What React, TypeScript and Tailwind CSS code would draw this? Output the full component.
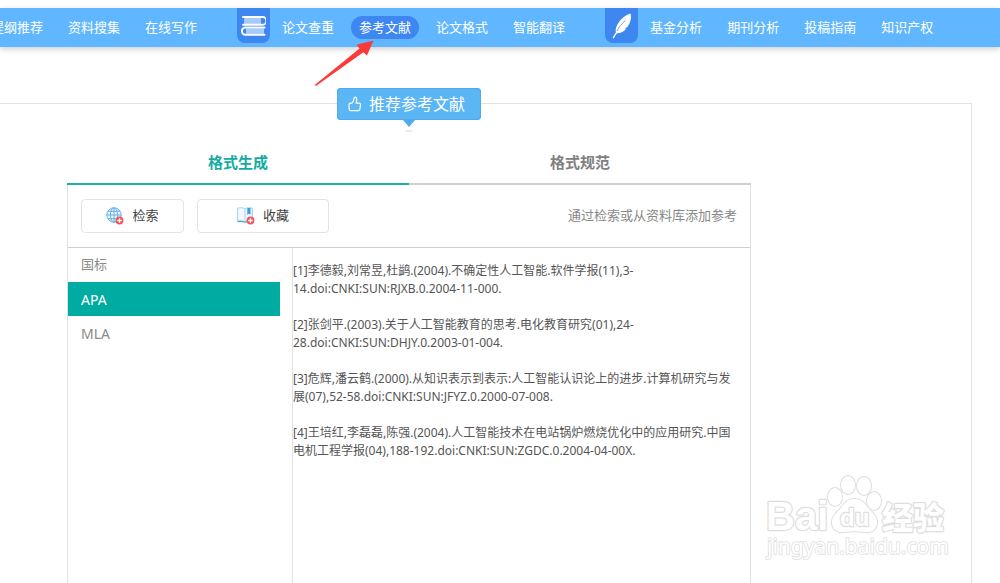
import React from "react";
import clsx from "clsx";

const writing = ["提纲推荐", "资料搜集", "在线写作"];
const checking = ["论文查重", "参考文献", "论文格式", "智能翻译"];
const publishing = ["基金分析", "期刊分析", "投稿指南", "知识产权"];
const styles = ["国标", "APA", "MLA"];

const references = [
  "[1]李德毅,刘常昱,杜鹢.(2004).不确定性人工智能.软件学报(11),3-14.doi:CNKI:SUN:RJXB.0.2004-11-000.",
  "[2]张剑平.(2003).关于人工智能教育的思考.电化教育研究(01),24-28.doi:CNKI:SUN:DHJY.0.2003-01-004.",
  "[3]危辉,潘云鹤.(2000).从知识表示到表示:人工智能认识论上的进步.计算机研究与发展(07),52-58.doi:CNKI:SUN:JFYZ.0.2000-07-008.",
  "[4]王培红,李磊磊,陈强.(2004).人工智能技术在电站锅炉燃烧优化中的应用研究.中国电机工程学报(04),188-192.doi:CNKI:SUN:ZGDC.0.2004-04-00X.",
];

function BooksIcon() {
  return (
    <svg width="25" height="20" viewBox="0 0 25 20" fill="none" aria-hidden="true">
      <path d="M3 2h17v6H3z" fill="#a9cbfb" />
      <path d="M5 12.400h18v5.400H5z" fill="#a9cbfb" />
      <path d="M2 1h19.500a3.800 3.800 0 0 1 0 7.800H2" stroke="#fff" strokeWidth="2" strokeLinecap="round" />
      <path d="M23.500 11.400H4.600a3.700 3.700 0 0 0 0 7.400h18.900" stroke="#fff" strokeWidth="2" strokeLinecap="round" />
    </svg>
  );
}

function FeatherIcon() {
  return (
    <svg width="20" height="26" viewBox="0 0 20 26" aria-hidden="true">
      <path d="M18.600.4C12.500 2 6 8.500 4.200 14.200c-.7 2.300-.6 3.700-.3 5L.6 24.600l1 .8 3.300-5.200c3.800.2 6.800-1.600 9.100-4.300l-1.200-.1 2.700-2c3-4.300 4.300-9.300 3.100-13.400z" fill="#fff" />
      <path d="M5 18C7 14 10 10.500 13.500 7.300" stroke="#3f87f0" strokeWidth=".8" fill="none" />
    </svg>
  );
}

function PlusDot() {
  return (
    <>
      <circle cx="13.500" cy="13.500" r="3.900" fill="#f4525c" />
      <path d="M13.500 11.300v4.400M11.300 13.500h4.400" stroke="#fff" strokeWidth="1.300" />
    </>
  );
}

function GlobeIcon() {
  return (
    <svg width="18" height="18" viewBox="0 0 18 18" fill="none" aria-hidden="true">
      <g stroke="#67b1e8" strokeWidth="1">
        <circle cx="8" cy="8" r="7.200" fill="#eaf5fd" />
        <ellipse cx="8" cy="8" rx="3.600" ry="7.200" />
        <path d="M8 .8v14.400M.8 8h14.400M2 4.300h12M2 11.700h12" />
      </g>
      <PlusDot />
    </svg>
  );
}

function BookmarkIcon() {
  return (
    <svg width="18" height="18" viewBox="0 0 18 18" fill="none" aria-hidden="true">
      <path d="M.6 1.200c2.500-.8 5-.6 7.400.4 2.300-1 4.700-1.200 7.400-.4v13c-2.700-.5-5.100-.4-7.400.6-2.300-1-4.900-1.100-7.400-.6z" fill="#f1f9fe" stroke="#9fd2f3" />
      <path d="M.5 14.600c2.500-.5 5-.4 7.500.5l3-.8" stroke="#4fa6e4" strokeWidth="1.300" />
      <path d="M8 1.800v13" stroke="#9fd2f3" />
      <path d="M10.300 1h3.200v7l-1.600-1.500L10.300 8z" fill="#3f9be0" />
      <PlusDot />
    </svg>
  );
}

function ThumbIcon() {
  return (
    <svg width="14" height="16" viewBox="0 0 14 16" fill="none" stroke="#fff" strokeWidth="1.200" strokeLinejoin="round" aria-hidden="true">
      <path d="M2.400 7.200h1.500C5.300 5.600 6 4 6.100 2.300c.1-1.500 2.200-1.500 2.500.2.200 1.400 0 2.800-.5 4.700h3c1 0 1.500.7 1.400 1.600l-.6 4.400c-.2 1-.8 1.500-1.700 1.500H2.800c-.9 0-1.500-.5-1.600-1.400l-.2-4.600c0-.9.500-1.500 1.400-1.500z" />
    </svg>
  );
}

function Arrow() {
  return (
    <svg className="pointer-events-none absolute top-6 -left-[37px] z-10" width="62" height="48" viewBox="0 0 62 48" aria-hidden="true">
      <path d="M59.500.5 53 15.500l-3.600-3.200L2.300 45.800a.8.800 0 0 1-1-1.200L45.500 8.500l-3-3.800z" fill="#fb3b3b" />
    </svg>
  );
}

function NavGroup({ items, active }: { items: string[]; active?: string }) {
  return (
    <ul className="flex shrink-0 gap-[9px]">
      {items.map((item) => (
        <li key={item} className="relative">
          <a
            href="#"
            className={clsx(
              "block rounded-full px-2 text-[13px] leading-[23px] whitespace-nowrap text-white",
              item === active && "bg-[#3f87f0]"
            )}
          >
            {item}
          </a>
          {item === active && <Arrow />}
        </li>
      ))}
    </ul>
  );
}

function GroupMark({ children }: { children: React.ReactNode }) {
  return (
    <span className="mr-1 ml-8 flex h-[35px] w-[33px] shrink-0 items-center justify-center self-start rounded-b-lg bg-[#3f87f0]">
      {children}
    </span>
  );
}

function Watermark() {
  return (
    <svg className="absolute right-[22px] bottom-5 font-['Liberation_Sans','Noto_Sans_CJK_SC',sans-serif]" width="184" height="90" viewBox="0 0 184 90" aria-hidden="true">
      <g fill="#fff" stroke="#dedede" strokeWidth="2.400" strokeLinejoin="round" style={{ paintOrder: "stroke" }}>
        <text x="1" y="57" fontSize="40" fontWeight="700">Bai</text>
        <g strokeWidth="2">
          <ellipse cx="70" cy="24" rx="7" ry="9" />
          <ellipse cx="83" cy="12" rx="7" ry="9" />
          <ellipse cx="99" cy="13" rx="7" ry="9" />
          <ellipse cx="109" cy="28" rx="7" ry="9" />
          <path d="M89 26c9 0 12 6 16 11 4 4 8 8 7 14-1 6-6 9-12 8-7-1-14-1-21 0-6 1-11-2-12-8-1-6 4-11 8-15 4-5 7-10 14-10z" />
        </g>
        <text x="75" y="53" fontSize="24" fontWeight="700">du</text>
        <text x="117" y="56" fontSize="31" fontWeight="900">经验</text>
        <text x="2" y="81" fontSize="21" strokeWidth="1.600" fontFamily="Noto Sans, sans-serif">jingyan.baidu.com</text>
      </g>
    </svg>
  );
}

export default function App() {
  const tool = "flex h-[34px] items-center justify-center gap-2 rounded border border-[#e3e3e3] bg-white text-[13px] text-[#444]";
  return (
    <div className="flex min-h-screen flex-col overflow-x-clip bg-white pt-2 font-['Noto_Sans','Noto_Sans_CJK_SC',sans-serif]">
      <nav className="relative flex h-[39px] items-center bg-[#60b7ff] shadow-[0_2px_6px_rgba(0,0,0,0.2)]">
        <div className="-ml-[17px] flex h-full items-center">
          <NavGroup items={writing} />
          <GroupMark><BooksIcon /></GroupMark>
          <NavGroup items={checking} active="参考文献" />
          <GroupMark><FeatherIcon /></GroupMark>
          <NavGroup items={publishing} />
        </div>
      </nav>

      <main className="relative mt-14 mr-7 flex grow flex-col border-t border-r border-[#e2e2e2] pl-[67px]">
        <section className="flex w-full max-w-[684px] grow flex-col">
          <button className="relative -mt-4 flex h-8 w-36 items-center gap-[7px] self-center rounded bg-[#5ab6f4] pl-[11px] text-[16px] text-white shadow-[inset_0_0_0_1px_#4fabe9]">
            <ThumbIcon />
            推荐参考文献
            <svg className="absolute top-8 left-1/2 -ml-1.5" width="12" height="13" viewBox="0 0 12 13" aria-hidden="true">
              <path d="M0 0h12L6 7z" fill="#4fabe9" />
              <ellipse cx="6" cy="11" rx="4" ry="1.300" fill="#ececec" />
            </svg>
          </button>

          <div role="tablist" className="mt-[21px] grid grid-cols-2 text-[15px] leading-[42px] font-bold">
            <button role="tab" aria-selected="true" className="border-b-2 border-[#18b2a8] text-[#12aca2]">格式生成</button>
            <button role="tab" aria-selected="false" className="border-b-2 border-[#cfcfcf] text-[#808080]">格式规范</button>
          </div>

          <div className="flex grow flex-col border-x border-[#e2e2e2]">
            <div className="flex items-center border-b border-[#cfcfcf] px-[13px] py-[14px]">
              <button className={clsx(tool, "w-[103px]")}><GlobeIcon />检索</button>
              <button className={clsx(tool, "ml-[13px] w-[132px]")}><BookmarkIcon />收藏</button>
              <p className="ml-auto text-[13px] text-[#888]">通过检索或从资料库添加参考</p>
            </div>
            <div className="flex grow">
              <ul className="w-[225px] shrink-0 border-r border-[#e2e2e2] pr-3">
                {styles.map((name) => (
                  <li key={name}>
                    <button
                      className={clsx(
                        "block h-[34px] w-full px-[13px] text-left",
                        name === "国标" ? "text-[13px]" : "text-[14px]",
                        name === "APA" ? "bg-[#00aba1] text-white" : "text-[#8a8a8a]"
                      )}
                    >
                      {name}
                    </button>
                  </li>
                ))}
              </ul>
              <div className="flex grow basis-0 flex-col gap-[18px] pt-[14px] pr-3 text-[12px] leading-[18px] text-[#555]">
                {references.map((entry) => (
                  <p key={entry}>{entry}</p>
                ))}
              </div>
            </div>
          </div>
        </section>
        <Watermark />
      </main>
    </div>
  );
}
